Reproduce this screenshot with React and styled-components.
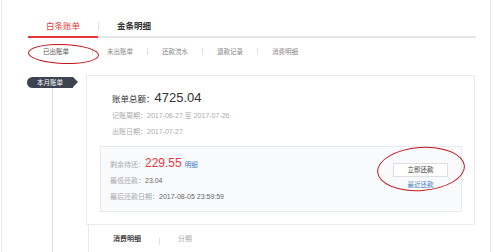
import React from 'react'
import styled, { createGlobalStyle } from 'styled-components'

const GlobalStyle = createGlobalStyle`
    html, body {
        margin: 0;
        background: #fff;
    }
    body {
        font-family: "Liberation Sans", "Noto Sans CJK SC", sans-serif;
        color: #333;
    }
`

const Page = styled.div`
    position: relative;
    width: 488px;
    height: 252px;
    margin-left: 1px;
    border-left: 1px solid #e4e7ec;
    border-right: 1px solid #e4e7ec;
    overflow: hidden;
`

const TabBar = styled.div`
    display: flex;
    align-items: flex-end;
    margin-left: 26px;
    width: 448px;
    height: 36px;
    border-bottom: 2px solid #e6e6e6;
`

const Tab = styled.div`
    width: 70px;
    text-align: center;
    font-size: 8.5px;
    line-height: 12px;
    padding-bottom: 4px;
    margin-bottom: -2px;
    font-weight: ${p => (p.$active ? 'normal' : 'bold')};
    color: ${p => (p.$active ? '#e4393c' : '#333')};
    border-bottom: 2px solid ${p => (p.$active ? '#e4393c' : 'transparent')};
`

const TabSep = styled.span`
    width: 1px;
    height: 8px;
    margin-bottom: 6px;
    background: #e2e2e2;
`

const SubTabs = styled.div`
    display: flex;
    align-items: center;
    margin-left: 26px;
    height: 27px;
`

const SubTab = styled.div`
    padding: 0 ${p => (p.$active ? '15px' : '14px')};
    margin-right: ${p => (p.$active ? '8px' : '0')};
    font-size: 6.5px;
    line-height: 10px;
    color: ${p => (p.$active ? '#555' : '#888')};
`

const SubSep = styled.span`
    width: 1px;
    height: 7px;
    background: #e0e0e0;
`

const Body = styled.div`
    display: flex;
    margin-top: 10px;
`

const Timeline = styled.div`
    display: flex;
    flex-direction: column;
    width: 84px;
    flex-shrink: 0;
`

const Badge = styled.div`
    position: relative;
    align-self: flex-start;
    margin: 2px 0 0 25px;
    width: 46px;
    height: 11px;
    line-height: 11px;
    border-radius: 6px 0 0 6px;
    background: #3e4351;
    color: #fff;
    font-size: 6.5px;
    text-align: center;
    &::after {
        content: "";
        position: absolute;
        right: -5px;
        top: 0;
        border-top: 5.5px solid transparent;
        border-bottom: 5.5px solid transparent;
        border-left: 5px solid #3e4351;
    }
`

const Rail = styled.div`
    width: 1px;
    height: 200px;
    margin-left: 50px;
    background: #dde1e6;
`

const Main = styled.div`
    display: flex;
    flex-direction: column;
    width: 389px;
`

const Card = styled.div`
    border: 1px solid #e8eaee;
    padding: 14px 12px 12px 13px;
`

const Line = styled.div`
    padding-left: 12px;
    font-size: ${p => (p.$big ? '8.5px' : '7px')};
    line-height: 16px;
    color: ${p => (p.$big ? '#333' : '#aaa')};
    margin-bottom: ${p => (p.$big ? '1px' : '0')};
`

const Total = styled.span`
    font-size: 13px;
    color: #333;
`

const Repay = styled.div`
    display: flex;
    justify-content: space-between;
    margin-top: 6px;
    padding: 8px 13px 6px 9px;
    background: #f8fafc;
    border: 1px solid #e6ebf2;
`

const Row = styled.div`
    font-size: 7px;
    line-height: 16px;
    color: #aaa;
`

const Value = styled.span`
    color: #666;
`

const Due = styled.span`
    font-size: 12px;
    color: #e4393c;
`

const BlueLink = styled.span`
    margin-left: 3px;
    font-size: 6.5px;
    color: #4a7fc8;
`

const Actions = styled.div`
    display: flex;
    flex-direction: column;
    align-items: center;
    padding-top: 8px;
`

const PayButton = styled.div`
    width: 53px;
    height: 12px;
    line-height: 12px;
    text-align: center;
    font-size: 6.5px;
    color: #444;
    background: #fff;
    border: 1px solid #dcdfe4;
`

const History = styled.div`
    margin-top: 3px;
    font-size: 6.5px;
    line-height: 10px;
    color: #4a7fc8;
`

const Lower = styled.div`
    display: flex;
    align-items: flex-end;
    margin-left: 2px;
    width: 383px;
    height: 30px;
    padding-left: 24px;
    border-left: 1px solid #e8eaee;
    border-right: 1px solid #e8eaee;
`

const LowerTab = styled.div`
    padding: 0 0 9px;
    font-size: 7px;
    line-height: 10px;
    font-weight: ${p => (p.$active ? 'bold' : 'normal')};
    color: ${p => (p.$active ? '#444' : '#aaa')};
    border-bottom: 2px solid ${p => (p.$active ? '#555' : 'transparent')};
`

const LowerSep = styled.span`
    width: 1px;
    height: 7px;
    margin: 0 18px 10px;
    background: #e0e0e0;
`

const Circle = styled.div`
    position: absolute;
    left: ${p => p.$x}px;
    top: ${p => p.$y}px;
    width: ${p => p.$w}px;
    height: ${p => p.$h}px;
    border: 1.5px solid #c4161c;
    border-radius: 50%;
    transform: rotate(${p => p.$r}deg);
    pointer-events: none;
`

const subTabs = ['未出账单', '还款流水', '退款记录', '消费明细']

function App() {
    return (
        <>
            <GlobalStyle />
            <Page>
                <TabBar>
                    <Tab $active>白条账单</Tab>
                    <TabSep />
                    <Tab>金条明细</Tab>
                </TabBar>
                <SubTabs>
                    <SubTab $active>已出账单</SubTab>
                    {subTabs.map(t => (
                        <React.Fragment key={t}>
                            <SubSep />
                            <SubTab>{t}</SubTab>
                        </React.Fragment>
                    ))}
                </SubTabs>
                <Body>
                    <Timeline>
                        <Badge>本月账单</Badge>
                        <Rail />
                    </Timeline>
                    <Main>
                        <Card>
                            <Line $big>账单总额：<Total>4725.04</Total></Line>
                            <Line>记账周期：2017-06-27 至 2017-07-26</Line>
                            <Line>出账日期：2017-07-27</Line>
                            <Repay>
                                <div>
                                    <Row>剩余待还：<Due>229.55</Due><BlueLink>明细</BlueLink></Row>
                                    <Row>最低还款：<Value>23.04</Value></Row>
                                    <Row>最后还款日期：<Value>2017-08-05 23:59:59</Value></Row>
                                </div>
                                <Actions>
                                    <PayButton>立即还款</PayButton>
                                    <History>最近还款</History>
                                </Actions>
                            </Repay>
                        </Card>
                        <Lower>
                            <LowerTab $active>消费明细</LowerTab>
                            <LowerSep />
                            <LowerTab>分期</LowerTab>
                        </Lower>
                    </Main>
                </Body>
                <Circle $x={26} $y={44} $w={69} $h={18} $r={2} />
                <Circle $x={375} $y={147} $w={86} $h={42} $r={-4} />
            </Page>
        </>
    )
}

export default App
